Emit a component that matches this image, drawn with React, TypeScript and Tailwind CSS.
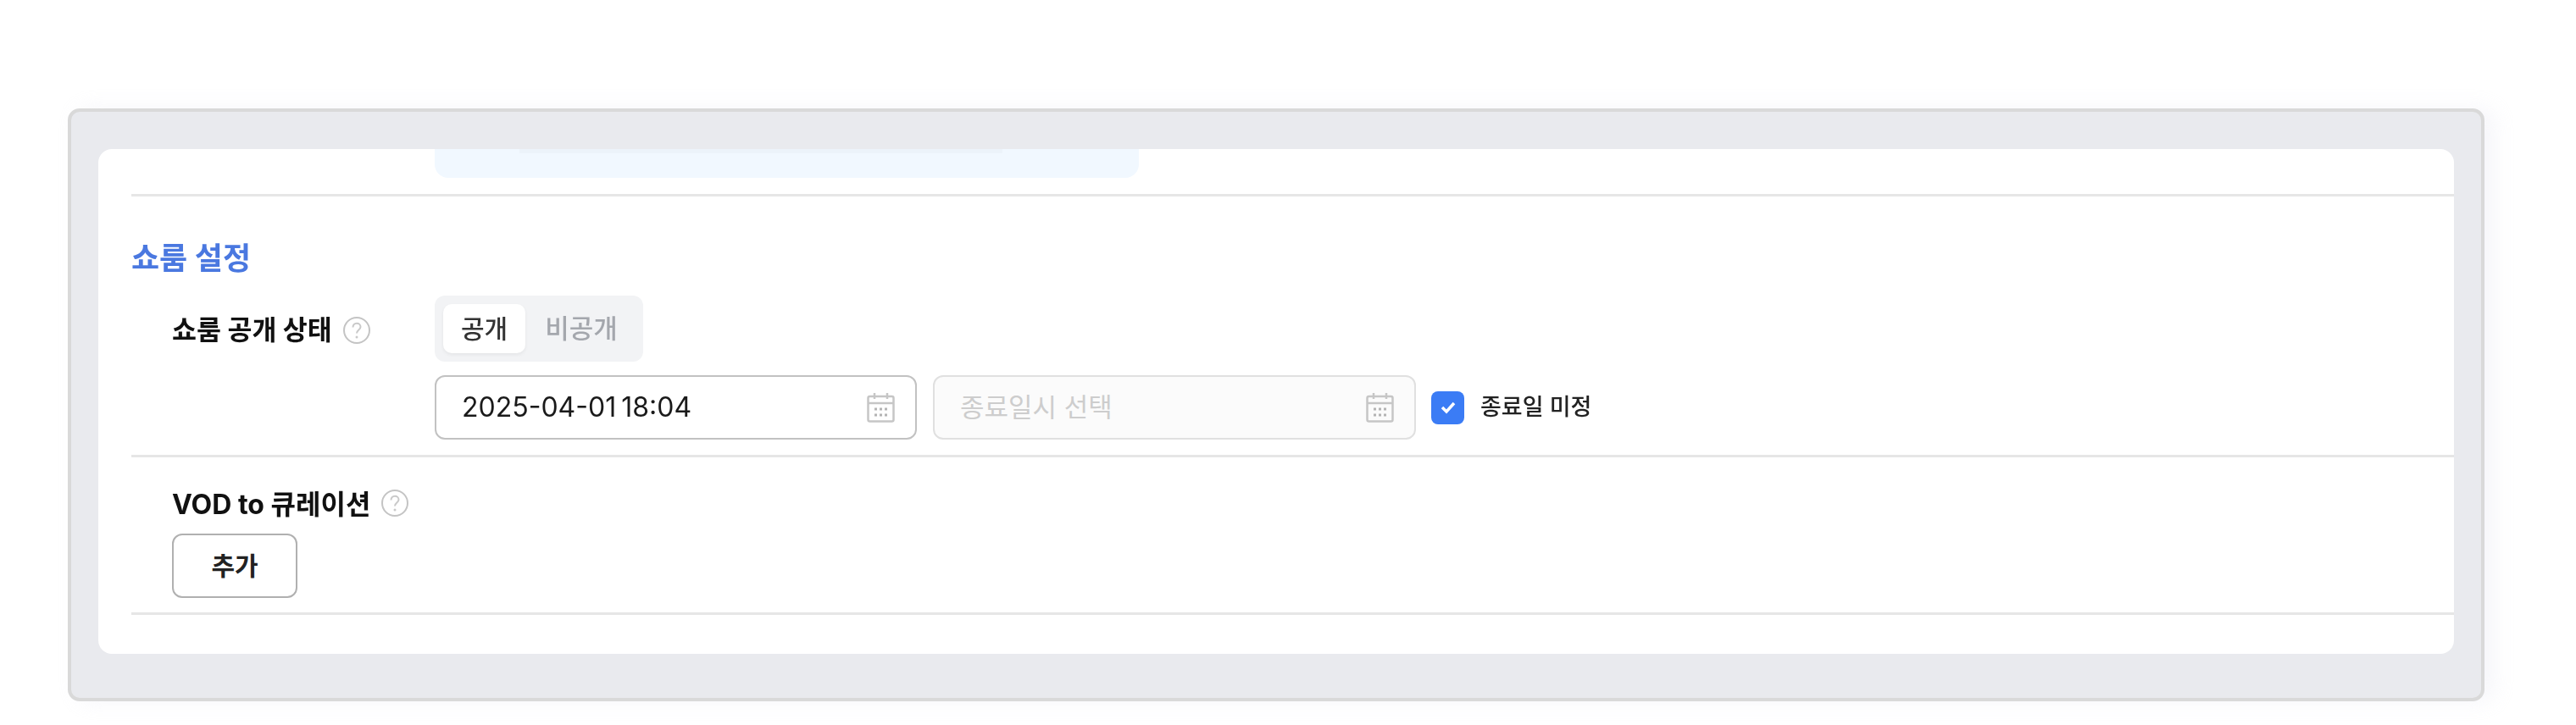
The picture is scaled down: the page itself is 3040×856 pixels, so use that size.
const FONT = "font-['Inter','Noto_Sans_CJK_KR',sans-serif]";

function HelpIcon() {
  return (
    <svg width="34" height="34" viewBox="0 0 34 34" fill="none" className="shrink-0">
      <circle cx="17" cy="17" r="15" stroke="#c4c4c4" strokeWidth="2" />
      <path d="M12.500 13.500c0-3 2-4.800 4.500-4.800s4.500 1.800 4.500 4.300c0 3.500-4.500 3.700-4.500 7.500" stroke="#c9c9c9" strokeWidth="2" />
      <circle cx="17" cy="25" r="1.500" fill="#c9c9c9" />
    </svg>
  );
}

function CalendarIcon() {
  return (
    <svg width="33" height="36" viewBox="0 0 33 36" fill="none" className="shrink-0">
      <rect x="1.500" y="5" width="30" height="29.500" rx="2" stroke="#c6c6c6" strokeWidth="2.500" />
      <path d="M1.500 13h30M9 1v7M24 1v7" stroke="#c6c6c6" strokeWidth="2.500" />
      <path d="M9 20h3M15 20h3M21 20h3M9 27h3M15 27h3M21 27h3" stroke="#b4b4b4" strokeWidth="3" />
    </svg>
  );
}

export default function App() {
  return (
    <div className={`h-[856px] w-[3040px] overflow-hidden bg-white pl-[80px] pt-[128px] ${FONT}`}>
      <div className="h-[700px] w-[2852px] rounded-[14px] border-4 border-[#d9d9d9] bg-[#e9eaee] pl-[32px] pr-[32px] pt-[44px] shadow-[12px_0_24px_rgba(225,225,240,0.3)]">
        <div className="h-[596px] overflow-hidden rounded-[16px] bg-white pl-[39px]">
          {/* 잘린 안내 박스 */}
          <div className="ml-[358px] h-[34px] w-[831px] rounded-b-[16px] bg-[#f1f8ff] pl-[100px]">
            <div className="h-[5px] w-[570px] bg-[#ecf3fa]" />
          </div>

          <div className="mt-[19px] border-b-[3px] border-[#e6e6e6]" />

          <div className="blur-[0.5px]">
            {/* 쇼룸 설정 */}
            <h2 className="mt-[55px] text-[36px] font-bold leading-[36px] text-[#4a78e0]">쇼룸 설정</h2>

            <div className="flex border-b-[3px] border-[#e6e6e6] pb-[18px] pl-[48px] pt-[26px]">
              <div className="flex h-[78px] w-[310px] items-center gap-[12px] pt-[4px]">
                <span className="text-[31.500px] font-bold leading-[36px] text-[#111]">쇼룸 공개 상태</span>
                <HelpIcon />
              </div>
              <div className="flex flex-col gap-[16px]">
                <div className="flex h-[78px] w-[246px] items-center rounded-[12px] bg-[#f2f3f5] pl-[10px]">
                  <div className="flex h-[58px] w-[97px] items-center justify-center rounded-[10px] bg-white text-[30px] font-medium text-[#333] shadow-[0_2px_4px_rgba(0,0,0,0.06)]">공개</div>
                  <div className="flex h-[58px] w-[132px] items-center justify-center text-[31px] font-medium text-[#a4a7ad]">비공개</div>
                </div>
                <div className="flex items-center">
                  <div className="flex h-[76px] w-[569px] items-center justify-between rounded-[12px] border-2 border-[#c2c2c2] pl-[30px] pr-[24px] text-[32px] [word-spacing:-3px] text-[#1a1a1a]">
                    <span>2025-04-01 18:04</span>
                    <CalendarIcon />
                  </div>
                  <div className="ml-[19px] flex h-[76px] w-[570px] items-center justify-between rounded-[12px] border-2 border-[#e0e0e0] bg-[#fbfbfb] pl-[30px] pr-[24px] text-[31px] text-[#cdcdcd]">
                    <span>종료일시 선택</span>
                    <CalendarIcon />
                  </div>
                  <div className="ml-[18px] flex h-[39px] w-[39px] items-center justify-center rounded-[8px] bg-[#3b7cf5]">
                    <svg width="22" height="18" viewBox="0 0 22 18" fill="none">
                      <path d="M4 9l5 5 9-10" stroke="#fff" strokeWidth="3.500" />
                    </svg>
                  </div>
                  <span className="ml-[19px] text-[27px] font-medium text-[#222]">종료일 미정</span>
                </div>
              </div>
            </div>

            {/* VOD to 큐레이션 */}
            <div className="border-b-[3px] border-[#e6e6e6] pb-[17px] pl-[48px] pt-[38px]">
              <div className="flex items-center gap-[12px]">
                <span className="text-[32px] font-bold leading-[36px] text-[#111]">VOD to 큐레이션</span>
                <span className="-mt-[5px]"><HelpIcon /></span>
              </div>
              <button className="mt-[16px] h-[76px] w-[148px] rounded-[12px] border-2 border-[#b0b0b0] bg-white text-[30px] font-semibold text-[#222]">추가</button>
            </div>
          </div>
        </div>
      </div>
    </div>
  );
}
